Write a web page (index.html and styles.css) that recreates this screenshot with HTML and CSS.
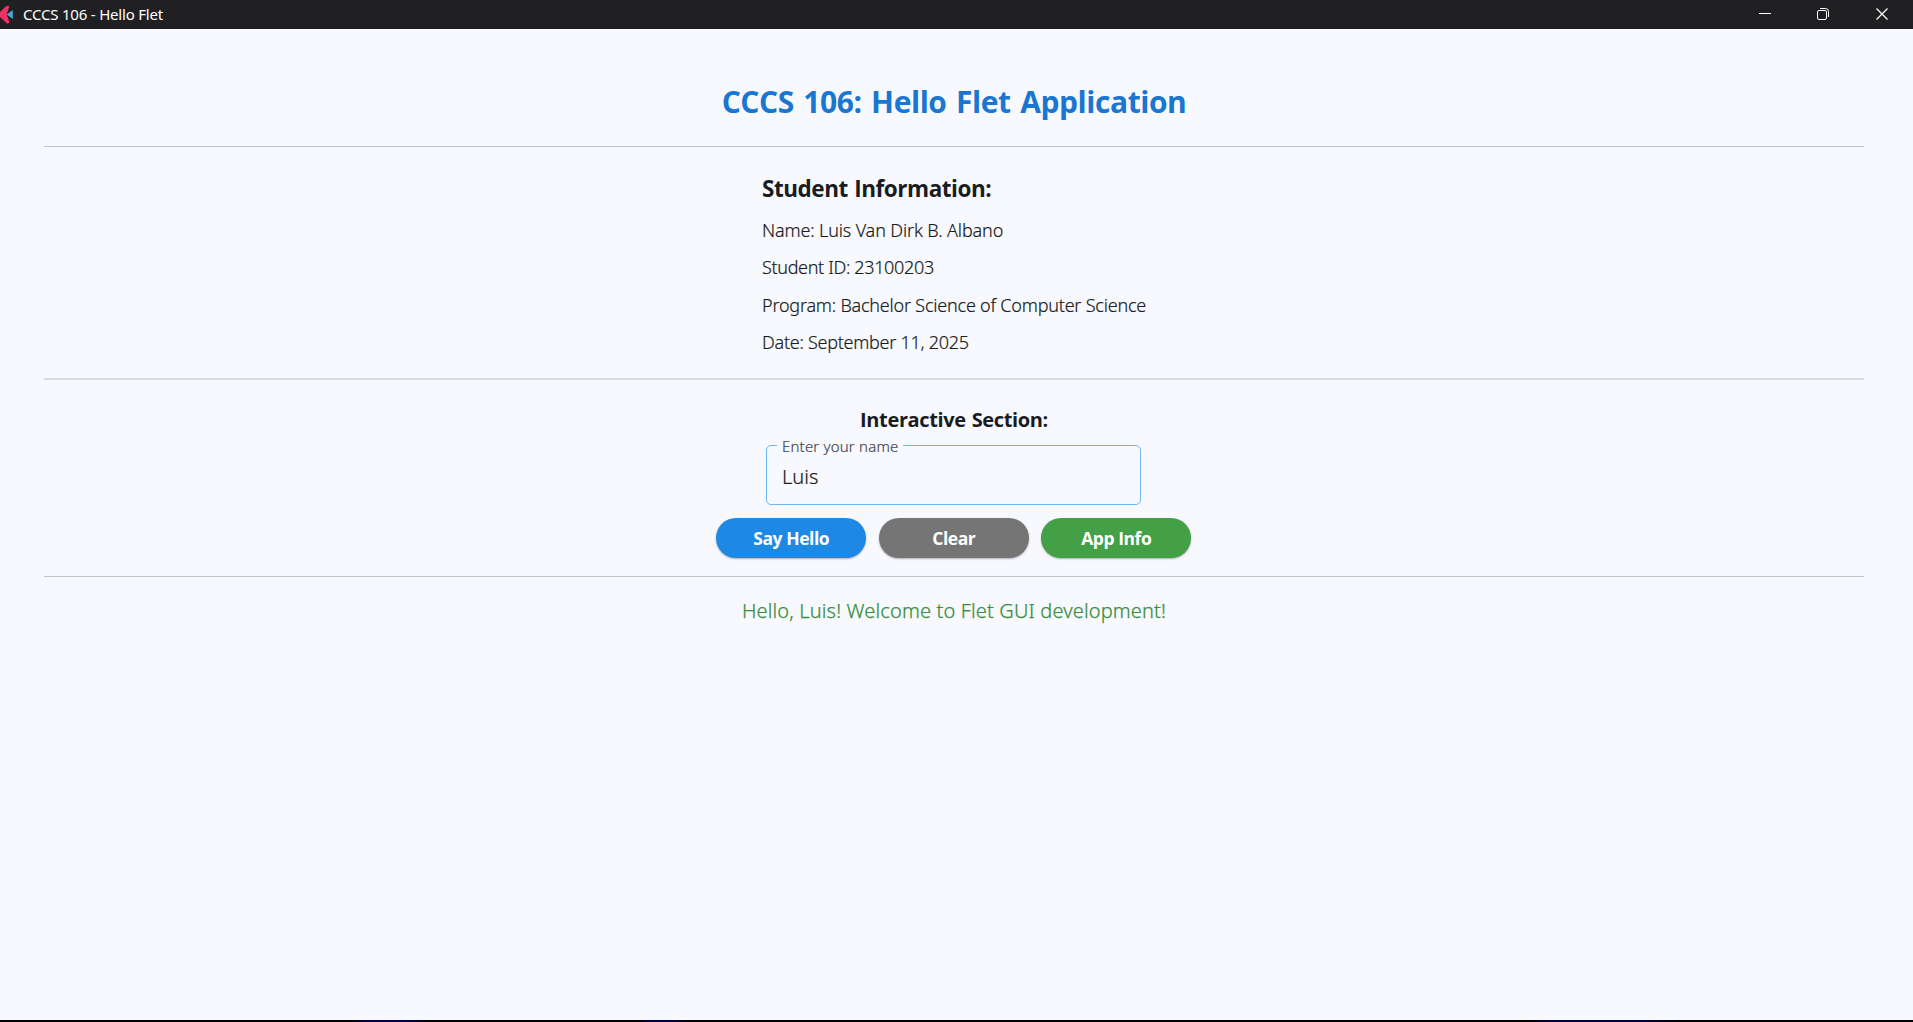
FILE: index.html
```html
<!DOCTYPE html>
<html lang="en">
<head>
<meta charset="utf-8">
<title>CCCS 106 - Hello Flet</title>
<link rel="stylesheet" href="styles.css">
</head>
<body>
<header class="titlebar">
  <svg class="logo" width="14" height="20" viewBox="0 0 14 20"><path d="M6 1.200C8 .2 9.600.6 9 2.200L6.600 9.500 9.200 16.500c.6 1.600-1.200 2.600-2.700 1.400L0 12V7z" fill="#ee3167"/><path d="M12.800 5v9L6.600 9.500z" fill="#45a9d8"/></svg>
  <span class="caption">CCCS 106 - Hello Flet</span>
  <div class="controls">
    <svg width="58" height="29" viewBox="0 0 58 29"><path d="M23 13.500h12" stroke="#fff"/></svg>
    <svg width="58" height="29" viewBox="0 0 58 29"><rect x="23.500" y="10.500" width="9" height="9" rx="1.500" fill="none" stroke="#fff"/><path d="M26 8.500h5.500a3 3 0 0 1 3 3V17" fill="none" stroke="#fff"/></svg>
    <svg width="58" height="29" viewBox="0 0 58 29"><path d="M24.500 8.500l11 11m0-11l-11 11" stroke="#fff" stroke-width="1.200"/></svg>
  </div>
</header>
<main class="page">
  <h1>CCCS 106: Hello Flet Application</h1>
  <hr class="rule">
  <section class="info">
    <h2>Student Information:</h2>
    <p class="name">Name: Luis Van Dirk B. Albano</p>
    <p class="sid">Student ID: 23100203</p>
    <p class="program">Program: Bachelor Science of Computer Science</p>
    <p class="date">Date: September 11, 2025</p>
  </section>
  <hr class="rule soft">
  <h3>Interactive Section:</h3>
  <div class="field">
    <span class="label">Enter your name</span>
    <span class="value">Luis</span>
  </div>
  <div class="actions">
    <button class="blue">Say Hello</button>
    <button class="gray">Clear</button>
    <button class="green">App Info</button>
  </div>
  <hr class="rule last">
  <p class="greeting">Hello, Luis! Welcome to Flet GUI development!</p>
</main>
<footer class="desktop-edge"></footer>
</body>
</html>
```
FILE: styles.css
```css
* { box-sizing: border-box; margin: 0; padding: 0; }
body {
  height: 1022px;
  overflow: hidden;
  display: flex;
  flex-direction: column;
  background: #f8f9ff;
  color: #191c20;
  font-family: "Noto Sans", "Open Sans", sans-serif;
}
.titlebar {
  height: 29px;
  flex: none;
  display: flex;
  align-items: center;
  background: #202022;
  color: #fff;
}
.logo { margin-right: 9px; }
.caption { font-size: 15px; line-height: 26px; padding-bottom: 2px; letter-spacing: -0.2px; }
.controls { display: flex; margin-left: auto; margin-right: 3px; }
.page {
  flex: 1;
  display: flex;
  flex-direction: column;
  align-items: center;
  padding: 53px 49px 0 44px;
}
h1 {
  font: 700 30px/40px "Open Sans", sans-serif;
  letter-spacing: -0.44px;
  word-spacing: 2.200px;
  color: #1976d2;
}
.rule { width: 100%; height: 1px; border: 0; background: #c0c4cc; margin-top: 24px; flex: none; }
.rule.soft { height: 2px; background: #d9dadf; margin-top: 16.500px; }
.rule.last { margin-top: 18px; }
.info { width: 384px; margin-top: 27px; }
h2 {
  font: 700 22.5px/30px "Open Sans", sans-serif;
  letter-spacing: -0.46px;
  word-spacing: 1px;
  margin-bottom: 8px;
}
.info p {
  font-size: 18px;
  font-weight: 300;
  line-height: 37.375px;
  white-space: nowrap;
  -webkit-text-stroke: 0.2px currentColor;
}
.name { letter-spacing: -0.14px; }
.sid { letter-spacing: -0.340px; }
.program { letter-spacing: -0.210px; }
.date { letter-spacing: -0.270px; }
h3 {
  font: 700 20px/28px "Open Sans", sans-serif;
  letter-spacing: -0.360px;
  word-spacing: 1px;
  margin-top: 26px;
}
.field {
  position: relative;
  width: 375px;
  height: 60px;
  margin-top: 11px;
  margin-right: 1px;
  border: 1.500px solid #6db7f6;
  border-radius: 5px;
  padding: 17px 15px;
}
.label {
  position: absolute;
  left: 10px;
  top: -11px;
  padding: 0 5px;
  background: #f8f9ff;
  color: #43474e;
  font-size: 15px;
  line-height: 22px;
  font-weight: 300;
  letter-spacing: 0.180px;
  -webkit-text-stroke: 0.2px currentColor;
}
.value {
  display: block;
  font-size: 20px;
  font-weight: 300;
  line-height: 28px;
  -webkit-text-stroke: 0.2px currentColor;
}
.actions { display: flex; gap: 12.500px; margin-top: 13px; margin-right: 0.500px; }
.actions button {
  width: 150px;
  height: 40px;
  border: 0;
  border-radius: 20px;
  color: #fff;
  font: 700 17.500px/40px "Open Sans", sans-serif;
  letter-spacing: -0.450px;
  box-shadow: 0 1px 2px rgba(0, 0, 0, 0.3);
}
.blue { background: #1e88e5; }
.gray { background: #757575; }
.green { background: #43a047; }
.greeting {
  margin-top: 20px;
  font-size: 20px;
  font-weight: 300;
  line-height: 28px;
  letter-spacing: 0.150px;
  color: #388e3c;
  -webkit-text-stroke: 0.25px currentColor;
}
.desktop-edge {
  height: 2px;
  flex: none;
  background: linear-gradient(90deg, #000 0 350px, #000050 370px 405px, #000 430px 640px, #000048 650px 670px, #000 690px 1530px, #000040 1550px 1640px, #000 1680px);
}
```
